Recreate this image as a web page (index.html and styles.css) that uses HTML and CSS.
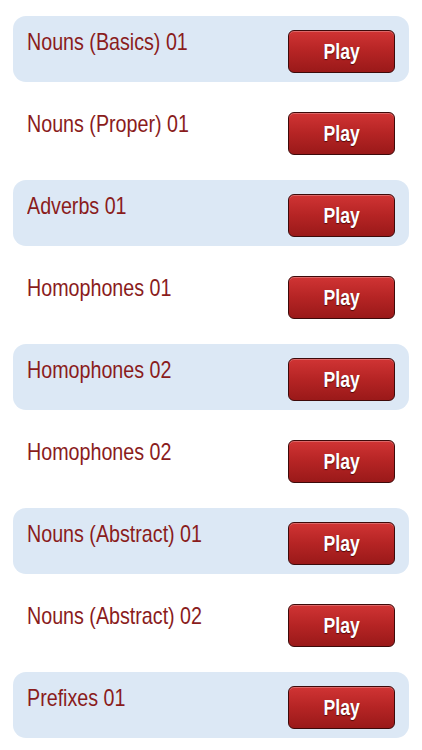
FILE: index.html
```html
<!DOCTYPE html>
<html lang="en">
<head>
    <meta charset="UTF-8">
    <meta name="viewport" content="width=device-width, initial-scale=1.0">
    <title>Word Games</title>
    <link rel="stylesheet" href="styles.css">
</head>
<body>
    <ul class="games">
        <li class="game shaded"><span class="title">Nouns (Basics) 01</span><button class="play"><span>Play</span></button></li>
        <li class="game"><span class="title">Nouns (Proper) 01</span><button class="play"><span>Play</span></button></li>
        <li class="game shaded"><span class="title">Adverbs 01</span><button class="play"><span>Play</span></button></li>
        <li class="game"><span class="title">Homophones 01</span><button class="play"><span>Play</span></button></li>
        <li class="game shaded"><span class="title">Homophones 02</span><button class="play"><span>Play</span></button></li>
        <li class="game"><span class="title">Homophones 02</span><button class="play"><span>Play</span></button></li>
        <li class="game shaded"><span class="title">Nouns (Abstract) 01</span><button class="play"><span>Play</span></button></li>
        <li class="game"><span class="title">Nouns (Abstract) 02</span><button class="play"><span>Play</span></button></li>
        <li class="game shaded"><span class="title">Prefixes 01</span><button class="play"><span>Play</span></button></li>
    </ul>
</body>
</html>
```

FILE: styles.css
```css
body {
    margin: 0;
    background: #fff;
    font-family: "Liberation Sans", Arial, sans-serif;
}

.games {
    list-style: none;
    margin: 0;
    padding: 16px 13px 0 13px;
    display: flex;
    flex-direction: column;
    gap: 16px;
}

.game {
    height: 66px;
    box-sizing: border-box;
    display: flex;
    justify-content: space-between;
    align-items: flex-start;
    padding: 0 14px 0 14px;
    border-radius: 13px;
}

.game.shaded {
    background-color: #dce8f5;
}

/* the app uses a condensed face; squeeze Liberation Sans to match */
.title {
    display: inline-block;
    margin-top: 12px;
    font-size: 24px;
    line-height: 28px;
    color: #8a1c1c;
    white-space: nowrap;
    transform: scaleX(0.82);
    transform-origin: left center;
}

.play {
    margin-top: 14px;
    width: 107px;
    height: 43px;
    border: 1px solid #3d0a0a;
    border-radius: 6px;
    background: linear-gradient(to bottom, #d03434 0%, #b52424 50%, #9a1919 100%);
    box-shadow: inset 0 1px 0 rgba(255, 255, 255, 0.25);
    color: #fff;
    font-family: "Liberation Sans", Arial, sans-serif;
    font-weight: bold;
    font-size: 22px;
    text-shadow: 0 1px 1px rgba(50, 0, 0, 0.7);
    padding: 0;
}

.play span {
    display: inline-block;
    transform: scaleX(0.8);
}
```
